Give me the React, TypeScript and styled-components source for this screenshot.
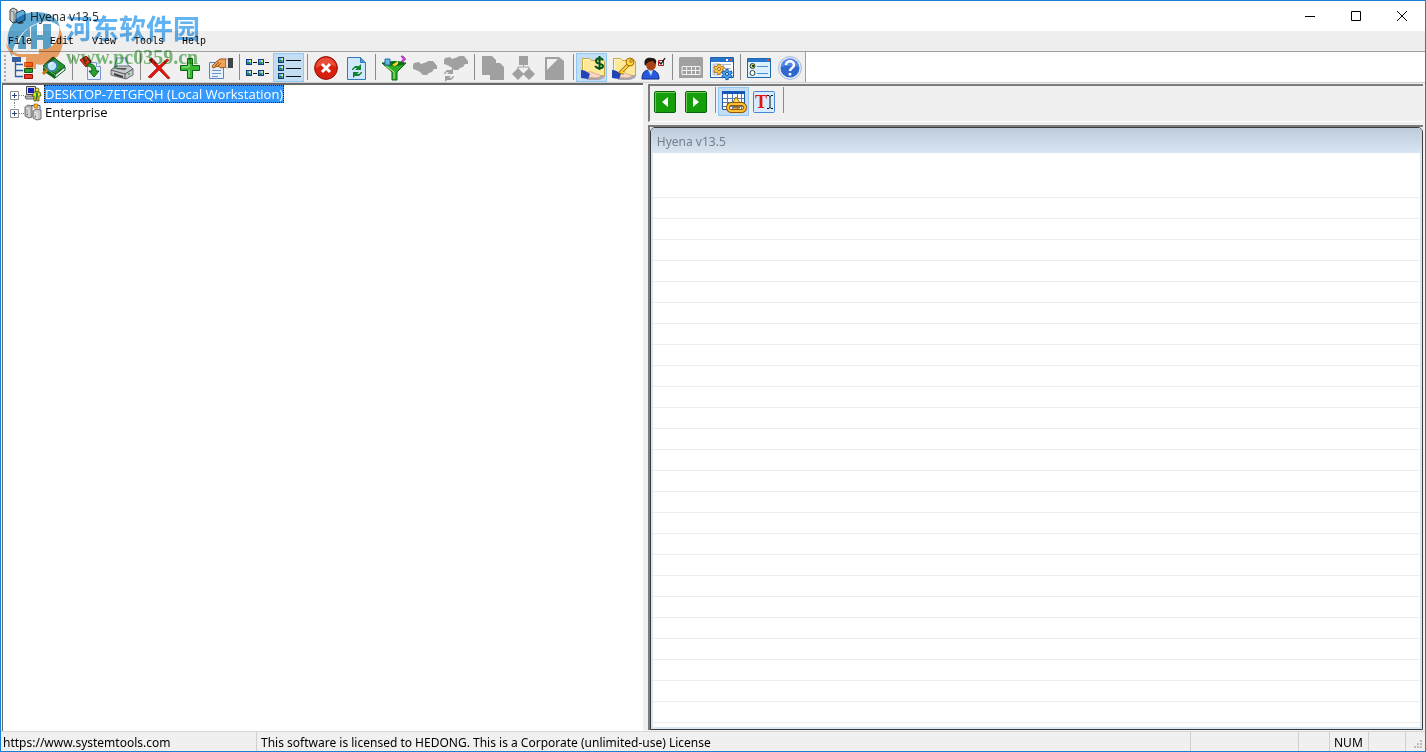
import React from "react";
import styled, { createGlobalStyle, css } from "styled-components";

const GlobalStyle = createGlobalStyle`
  * { box-sizing: border-box; }
  body { margin: 0; font-family: "Noto Sans", "Open Sans", sans-serif; font-size: 12px; color: #000; }
  button { font: inherit; color: inherit; background: none; border: 0; padding: 0; margin: 0; }
  svg { display: block; overflow: visible; flex: none; }
`;

const Window = styled.div`
  position: relative;
  display: flex;
  flex-direction: column;
  height: 100vh;
  border: 1px solid #1a7fd4;
  background: #fff;
`;

const TitleBar = styled.header`
  display: flex;
  align-items: center;
  height: 30px;
  flex: none;
  padding-left: 8px;
`;

const TitleText = styled.h1`
  flex: 1;
  margin: 0 0 0 5px;
  font-size: 12px;
  font-weight: 400;
  color: #333;
`;

const CaptionButton = styled.button`
  display: flex;
  align-items: center;
  justify-content: center;
  width: 46px;
  height: 30px;
`;

const MenuBar = styled.nav`
  display: flex;
  height: 21px;
  flex: none;
  padding-left: 7px;
  gap: 18px;
  background: #eee;
  border-bottom: 1px solid #a0a0a0;
`;

const MenuButton = styled.button`
  padding-top: 1px;
  font-family: "Liberation Mono", monospace;
  font-size: 10px;
  line-height: 20px;
`;

const ToolbarRow = styled.div`
  display: flex;
  height: 31px;
  flex: none;
  border-bottom: 1px solid #d0d0d0;
`;

const Toolbar = styled.div`
  display: flex;
  align-items: flex-end;
  background: #f0f0f0;
  border-right: 1px solid #a0a0a0;
`;

const Grip = styled.div`
  width: 6px;
  height: 28px;
  background: radial-gradient(circle at 4px 2px, #aaa 1px, transparent 1px) 0 0 / 6px 4px;
`;

const ToolButton = styled.button<{ $active?: boolean }>`
  display: flex;
  align-items: center;
  width: 31px;
  height: 29px;
  padding-left: ${(p) => (p.$active ? 2 : 3)}px;
  ${(p) =>
    p.$active &&
    css`
      background: #c2ddf4;
      border: 1px solid #90c8f6;
    `}
`;

const Separator = styled.div`
  width: 1px;
  height: 26px;
  margin: 0 2px 2px 3px;
  background: #8c8c8c;
`;

const Workspace = styled.main`
  display: flex;
  flex: 1;
  min-height: 0;
  background: #f0f0f0;
`;

const TreePane = styled.section`
  flex: 0 0 45%;
  margin-left: 1px;
  background: #fff;
  border-top: 2px solid #696969;
  border-left: 1px solid #696969;
`;

const Splitter = styled.div`
  width: 5px;
  background: #f0f0f0;
`;

const TreeList = styled.ul`
  list-style: none;
  margin: 0;
  padding: 0 0 0 7px;
`;

const TreeRow = styled.li`
  display: flex;
  align-items: center;
  height: 18px;
`;

const TreeLabel = styled.button<{ $selected?: boolean }>`
  height: 18px;
  margin-left: 3px;
  padding: 0;
  border: 1px solid transparent;
  font-family: "Open Sans", sans-serif;
  font-size: 13px;
  line-height: 16px;
  white-space: nowrap;
  ${(p) =>
    p.$selected &&
    css`
      color: #fff;
      background: #3399ff;
      border: 1px dotted #331a00;
    `}
`;

const Expander = styled.button`
  display: flex;
`;

const DetailPane = styled.section`
  display: flex;
  flex-direction: column;
  flex: 1;
  min-width: 0;
  padding: 1px 2px 1px 0;
`;

const DetailToolbar = styled.div`
  display: flex;
  align-items: flex-start;
  height: 38px;
  flex: none;
  padding-top: 1px;
  border-top: 2px solid #7c7c7c;
  border-left: 2px solid #7c7c7c;
  border-bottom: 1px solid #fff;
`;

const ChildArea = styled.div`
  display: flex;
  flex: 1;
  min-height: 0;
  margin-top: 3px;
  border-top: 2px solid #7c7c7c;
  border-left: 2px solid #7c7c7c;
`;

const ChildWindow = styled.div`
  display: flex;
  flex-direction: column;
  flex: 1;
  padding: 0 2px 2px 2px;
  background: #d9e5f1;
  border: 1px solid #3c3c3c;
  border-radius: 5px 5px 0 0;
`;

const ChildTitle = styled.h2`
  height: 25px;
  flex: none;
  margin: 0 -2px;
  padding-left: 6px;
  border-radius: 4px 4px 0 0;
  background: linear-gradient(#bccbdb, #d9e5f2);
  color: #76808a;
  font-size: 12px;
  font-weight: 400;
  line-height: 27px;
`;

const ListView = styled.div`
  flex: 1;
  padding-top: 24px;
  background: #fff;
`;

const ListLines = styled.div`
  height: 100%;
  background: repeating-linear-gradient(#fff 0 20px, #ededed 20px 21px);
`;

const StatusBar = styled.footer`
  display: flex;
  height: 20px;
  flex: none;
  background: #f0f0f0;
  border-top: 1px solid #d7d7d7;
  font-size: 12px;
  line-height: 21px;
  white-space: nowrap;
`;

const StatusCell = styled.div<{ $width?: number }>`
  ${(p) => (p.$width ? `width: ${p.$width}px; flex: none;` : "flex: 1; min-width: 0;")}
  padding-left: 2px;
  overflow: hidden;
  & + & {
    padding-left: 4px;
    border-left: 1px solid #d0d0d0;
  }
`;

const SizeGrip = styled.div`
  display: flex;
  align-items: flex-end;
  justify-content: flex-end;
  width: 20px;
  padding: 0 2px 2px 0;
  border-left: 1px solid #d0d0d0;
`;

const Watermark = styled.div`
  position: absolute;
  top: 10px;
  left: 3px;
  display: flex;
  mix-blend-mode: multiply;
  pointer-events: none;
`;

const WatermarkText = styled.div`
  display: flex;
  flex-direction: column;
  white-space: nowrap;
`;

const WatermarkName = styled.span`
  color: #62b3f2;
  font: 700 27px/34px "Noto Sans CJK SC", sans-serif;
`;

const WatermarkUrl = styled.span`
  padding-left: 1px;
  color: #7cc07c;
  font: 700 20px/24px "Liberation Serif", serif;
`;

type IconProps = { children: React.ReactNode; size?: number };
const Icon = ({ children, size = 24 }: IconProps) => (
  <svg width={size} height={size} viewBox={`0 0 ${size} ${size}`} aria-hidden="true">
    {children}
  </svg>
);

const TreeIcon = () => (
  <Icon>
    <path d="M5.500 5v16M5 8.500h8M5 14.500h8M5 20.500h8" stroke="#2a5ea8" fill="none" strokeWidth="1.300" />
    <path d="M2 1h9v5H2z" fill="#355e9e" />
    <path d="M14.500 6.500h8v4h-8z" fill="#ff8a30" stroke="#c85a10" />
    <path d="M14.500 12.500h8v4h-8z" fill="#2c9a35" stroke="#145c1c" />
    <path d="M14.500 18.500h8v4h-8z" fill="#ef3524" stroke="#981308" />
  </Icon>
);

const BookIcon = () => (
  <Icon>
    <path d="M12 1 24 10 14 18 2 10z" fill="#239632" stroke="#075a14" />
    <path d="M2 11 14 19v4L2 15z" fill="#0a6a1a" />
    <path d="m14 19 10-8v3l-10 8z" fill="#fff" stroke="#075a14" />
    <path d="m7 13-5 5" stroke="#b97913" strokeWidth="3" />
    <circle cx="11" cy="10" r="5" fill="#bce6fa" stroke="#3d80b5" strokeWidth="1.600" />
    <path d="M8.500 9a3 3 0 0 1 3-2" stroke="#fff" fill="none" />
  </Icon>
);

const DocArrowIcon = () => (
  <Icon>
    <path d="M9.500 6.500h9l4 4v13h-13z" fill="#e8f0fe" stroke="#7896cf" />
    <path d="M18.500 6.500v4h4" fill="#fff" stroke="#7896cf" />
    <path d="M2 4 8 0l5 5-5 6z" fill="#e13a20" stroke="#961505" />
    <path d="M9 8c6-1 9 2 9 7h3l-5 6-5-6h3c0-4-2-5-5-5z" fill="#2aa12f" stroke="#075f12" />
  </Icon>
);

const PrinterIcon = () => (
  <Icon>
    <path d="M8 2h9l3 10H5z" fill="#e4effc" stroke="#7d98b7" />
    <path d="M2 14l5-4h14l3 3v6l-7 4L2 19z" fill="#c7cacd" stroke="#686d72" />
    <path d="m2 14 14 4 8-5M16 18v5" stroke="#555" fill="none" />
    <path d="m5 17 9 3v2l-9-3z" fill="#383b3e" />
    <path d="M9 12h9l-2 2-9-1z" fill="#555" />
    <circle cx="20" cy="18" r="1" fill="#3aac39" />
  </Icon>
);

const DeleteIcon = () => (
  <Icon>
    <path d="M3 4 6 2l7 8 8-7 2 1-8 8 9 10-2 1-9-9-8 8-3-1 9-9z" fill="#e4150f" stroke="#9b0d09" strokeWidth=".6" />
  </Icon>
);

const AddIcon = () => (
  <Icon>
    <path d="M10.500 2.500h5v7h7v5h-7v8h-5v-8h-7v-5h7z" fill="#38b735" stroke="#08650d" />
    <path d="M12 4v7H5M12 14v7" stroke="#a5ec91" fill="none" />
  </Icon>
);

const PropertiesIcon = () => (
  <Icon>
    <path d="M1.500 6.500h14v16h-14z" fill="#e5f0ff" stroke="#5683c5" />
    <path d="M4 14.500h9M4 17.500h9M4 20.500h6" stroke="#7594c4" />
    <path d="m4 10 4-4 4-3h6v8l-5 1-3-2-5 2z" fill="#f2a255" stroke="#9b5515" />
    <path d="m7 10 4-4M9 11l4-4" stroke="#9b5515" />
    <path d="M18 3h2v9h-2z" fill="#fff" stroke="#777" strokeWidth=".5" />
    <path d="M20 2h5v10h-5z" fill="#454545" />
  </Icon>
);

const Tile = ({ x, y }: { x: number; y: number }) => (
  <g>
    <path d={`M${x} ${y}h6v6h-6z`} fill="#153d82" />
    <path d={`M${x + 1} ${y + 1}h4v4h-4z`} fill="#53b7dd" />
    <path d={`M${x + 1} ${y + 3}h3v2h-3z`} fill="#2d8b42" />
    <path d={`M${x + 3} ${y + 1}h2v2h-2z`} fill="#f2e15a" />
  </g>
);

const SmallListIcon = () => (
  <Icon>
    <Tile x={1} y={3} /><Tile x={13} y={3} /><Tile x={1} y={14} /><Tile x={13} y={14} />
    <path d="M8 6.500h4M20 6.500h4M8 17.500h4M20 17.500h4" stroke="#111" />
  </Icon>
);

const DetailListIcon = () => (
  <Icon>
    <Tile x={2} y={1} /><Tile x={2} y={9} /><Tile x={2} y={17} />
    <path d="M10 4.500h15M10 12.500h15M10 20.500h15" stroke="#111" />
  </Icon>
);

const StopIcon = () => (
  <Icon>
    <circle cx="13" cy="12" r="11.400" fill="#d9200e" stroke="#8d1207" />
    <path d="M3 12a10 10 0 0 1 20-1c-6-4-13-3-20 1z" fill="#f26750" opacity=".65" />
    <path d="m9 8 8 8m0-8-8 8" stroke="#fff" strokeWidth="3" />
  </Icon>
);

const RefreshArrows = () => (
  <path d="M0 4V3l3-3h4L9-2v6H3l2-2H3L1 4zM10 6v1l-3 3H3l-2 2V6h6L5 8h2l2-2z" />
);

const RefreshIcon = () => (
  <Icon>
    <path d="M3.500 1.500h13l5 5v17h-18z" fill="#cfe8ff" stroke="#3279c0" />
    <path d="M16.500 1.500v5h5" fill="#5493e0" stroke="#3279c0" />
    <g transform="translate(8 10)" fill="#128431"><RefreshArrows /></g>
  </Icon>
);

const FilterIcon = () => (
  <Icon>
    <path d="M1 7h24l-9 9v8h-5v-8z" fill="#2eac2a" stroke="#09630b" />
    <ellipse cx="13" cy="7.500" rx="11" ry="2.500" fill="#0b7011" />
    <path d="m5 10 8 6v7" stroke="#91dc72" strokeWidth="1.300" fill="none" />
    <path d="M4 3h5v6H4z" fill="#65b5ea" stroke="#286da5" />
    <path d="m11 9 6-4v3l-3 2z" fill="#ffdc28" />
    <path d="M20 0h2l3 3-3 3h-2l2-3z" fill="#d640df" stroke="#7c178c" strokeWidth=".5" />
  </Icon>
);

const handshake = "M1 9l1-2 5-1 2 2 6-2 1-1h5l4 5v3h-3l-2 3-3 1-2 2h-4l-3-3-2-1-2-1-3-1z";
const ShareIcon = () => <Icon><path d={handshake} fill="#a0a0a0" /></Icon>;
const ShareRefreshIcon = () => (
  <Icon>
    <path d={handshake} transform="translate(0 -5)" fill="#a0a0a0" />
    <g transform="translate(1 14)" fill="#a0a0a0"><RefreshArrows /></g>
  </Icon>
);
const CopyIcon = () => <Icon><path d="M2 0h10l4 4v3h4l4 4v13H10v-5H2z" fill="#a0a0a0" /></Icon>;
const OrgIcon = () => (
  <Icon>
    <path d="M8 0h9v9H8zM7 12l6 6-6 6-6-6zM18 12l6 6-6 6-6-6z" fill="#a0a0a0" />
    <path d="M12.500 8v3M7 13v-2h11v2" stroke="#a0a0a0" fill="none" />
  </Icon>
);
const PageIcon = () => (
  <Icon>
    <path d="M3 1h14l5 4v19H3z" fill="#a0a0a0" />
    <path d="M5 3h11L5 14z" fill="#f0f0f0" />
  </Icon>
);

const FolderHand = () => (
  <>
    <path d="M3.500 2.500h7l2 2h12l1 1v15h-22z" fill="#ffe999" stroke="#cba63b" />
    <path d="M4.500 19V3.500h6" stroke="#fffbd6" fill="none" />
    <path d="M10 19h15v3l-5 2H8z" fill="#a9a9b0" />
    <path d="M9 16c4-1 6 2 12 3l1 2-6 1-8-1z" fill="#f8d8c4" stroke="#b98468" strokeWidth=".5" />
    <path d="M2 14c4 0 6 2 9 4l-2 5-7-1z" fill="#2145b4" />
  </>
);
const DollarIcon = () => (
  <Icon>
    <FolderHand />
    <path d="M24 4c-2-3-7-2-7 1 0 4 7 2 7 5 0 3-6 3-8 0M20.500 0v14" fill="none" stroke="#00531a" strokeWidth="2" />
  </Icon>
);
const KeyIcon = () => (
  <Icon>
    <FolderHand />
    <path d="m19 8-8 8 3 1" stroke="#a26a00" strokeWidth="3.500" fill="none" />
    <path d="m20 7-9 9 3 1" stroke="#ffd541" strokeWidth="1.800" fill="none" />
    <circle cx="20" cy="6" r="4" fill="#ffd645" stroke="#a26a00" />
    <circle cx="21" cy="5" r="1.300" fill="#fff6cd" stroke="#a26a00" />
  </Icon>
);
const UserIcon = () => (
  <Icon>
    <path d="M1 23c0-7 3-9 8-9s9 2 9 9z" fill="#2659dd" stroke="#102c87" />
    <path d="m7 14 3 6 2-6z" fill="#b9dcff" />
    <ellipse cx="10" cy="8.500" rx="5" ry="6" fill="#a94318" />
    <path d="M4 10C2 3 6 1 11 2c5 0 5 5 3 6l-2-3-5 1z" fill="#211613" />
    <path d="M17.500 4.500h5v5h-5z" fill="#fff" stroke="#bd1916" />
    <path d="m18 6 2 2 4-6" stroke="#111" fill="none" strokeWidth="1.300" />
  </Icon>
);
const TableIcon = () => (
  <Icon>
    <path d="M2 1h22l1 1v20H1V2z" fill="#a0a0a0" />
    <path d="M4 10.500h18v8H4zM4 14.500h18M8.500 10v9M13.500 10v9M17.500 10v9" fill="none" stroke="#f0f0f0" />
  </Icon>
);
const gear = "M-1.500-6h3v2l2 1 2-1 1 3-2 1v1l2 1-1 3-2-1-2 1v2h-3V5l-2-1-2 1-1-3 2-1V0l-2-1 1-3 2 1 2-1z";
const WindowGearsIcon = () => (
  <Icon>
    <path d="M1.500 1.500h23v20h-23z" fill="#fff" stroke="#1c61b0" />
    <path d="M2 2h22v4H2z" fill="#2875cd" />
    <path d="M17 3h2v2h-2z" fill="#fff" /><path d="M21 3h2v2h-2z" fill="#ed4c24" />
    <path d="M4 8h5v11H4zM11 8.500h11M11 12.500h11" fill="#dceafa" stroke="#a4bddb" />
    <path d={gear} transform="translate(10 13) scale(.8)" fill="#ffc84a" stroke="#9b6100" />
    <circle cx="10" cy="13" r="1.500" fill="#fff" stroke="#9b6100" />
    <path d={gear} transform="translate(18 18) scale(.8)" fill="#47a4f2" stroke="#0b4a9c" />
    <circle cx="18" cy="18" r="1.500" fill="#fff" stroke="#0b4a9c" />
  </Icon>
);
const OptionsIcon = () => (
  <Icon>
    <path d="M1.500 2.500h23v19h-23z" fill="#dcefff" stroke="#1c68ad" />
    <path d="M2 3h22v3H2z" fill="#2875cd" /><path d="M21 3h2v2h-2z" fill="#ed4c24" />
    <circle cx="6.500" cy="10" r="2.500" fill="#d5d34b" stroke="#26463f" />
    <circle cx="6.500" cy="17" r="2.500" fill="#fff" stroke="#26463f" />
    <path d="M6 9h2v2H6z" fill="#153f22" />
    <path d="M11 10.500h11M11 17.500h11" stroke="#4a91d0" />
  </Icon>
);
const HelpIcon = () => (
  <Icon>
    <circle cx="13" cy="12" r="11.400" fill="#e8efff" stroke="#a4b6dc" />
    <circle cx="13" cy="12" r="9.500" fill="#2e68ce" />
    <path d="M4 11a9 9 0 0 1 18 0c-6-2-12-1-18 0z" fill="#6d9bed" opacity=".65" />
    <path d="M9 9c0-5 8-5 8 0 0 3-4 3-4 6" stroke="#fff" strokeWidth="2.500" fill="none" />
    <path d="M11.700 17h2.600v2.500h-2.600z" fill="#fff" />
  </Icon>
);

const ArrowTile = ({ forward }: { forward?: boolean }) => (
  <Icon>
    <rect x="1.500" y="1.500" width="21" height="21" rx="1.500" fill="#159e0a" stroke="#08650a" />
    <path d="M2.500 22V2.500H22" stroke="#73c85c" fill="none" />
    <path d={forward ? "m9 7 6 5-6 5z" : "m15 7-6 5 6 5z"} fill="#fff" />
  </Icon>
);
const LinkTableIcon = () => (
  <Icon>
    <path d="M1.500 1.500h22v18h-22z" fill="#fff" stroke="#2054a6" />
    <path d="M1 1h23v3H1z" fill="#1457b9" />
    <path d="M2 8.500h21M2 12.500h21M2 16.500h21M6.500 4v15M11.500 4v15M16.500 4v15M20.500 4v15" stroke="#507ab3" />
    <path d="m15 7 5 7h-9z" fill="#ffe158" stroke="#ad7400" />
    <rect x="7" y="14" width="17" height="7" rx="3.500" fill="none" stroke="#935700" strokeWidth="4" />
    <rect x="7" y="14" width="17" height="7" rx="3.500" fill="none" stroke="#ffc236" strokeWidth="2" />
    <path d="M12 17.500h7" stroke="#a86700" strokeWidth="2" />
  </Icon>
);
const TextIcon = () => (
  <Icon>
    <rect x="1.500" y="1.500" width="21" height="21" rx="1" fill="#d8ecff" stroke="#4685d2" />
    <text x="3" y="18" fill="#e01616" fontFamily="Liberation Serif, serif" fontWeight="700" fontSize="18">T</text>
    <path d="M15 5.500h2l1 1 1-1h2M18 6v12M15 18.500h2l1-1 1 1h2" stroke="#111" fill="none" />
  </Icon>
);

const AppIcon = () => (
  <Icon size={16}>
    <path d="M1 2 4 0l4 2v12l-4 1-3-3z" fill="#c9cccd" stroke="#444" />
    <path d="m2 3 3 1v10" stroke="#777" fill="none" />
    <path d="m7 5 7-3 2 2v8l-7 3-2-2z" fill="#5eaee0" stroke="#29495c" />
    <path d="m8 15 5-2 2 2-4 1z" fill="#555" />
  </Icon>
);
const WorkstationIcon = () => (
  <Icon size={16}>
    <path d="M1.500.5h9v8h-9z" fill="#ddd" stroke="#444" />
    <path d="M3 2h6v5H3z" fill="#1520b9" />
    <path d="M0 10h11l2 3H1z" fill="#bbb" stroke="#333" strokeWidth=".7" />
    <circle cx="12" cy="4" r="2" fill="#e6df26" stroke="#343400" strokeWidth=".6" />
    <path d="M9 6h6l1 4h-2v5h-2v-4h-1v4H9v-5H7z" fill="#e5de22" stroke="#343400" strokeWidth=".7" />
    <path d="M11 7h2v4h-2z" fill="#168b44" />
  </Icon>
);
const EnterpriseIcon = () => (
  <Icon size={16}>
    <path d="M6 1.500h9v4" stroke="#1664be" fill="none" />
    <path d="m0 3 3-2 4 1v11l-3 1-4-2z" fill="#b8b8b8" stroke="#555" strokeWidth=".8" />
    <path d="m8 7 3-2 5 1v9l-4 1-4-2z" fill="#c8c8c8" stroke="#555" strokeWidth=".8" />
    <path d="M9 0h4v4H9z" fill="#ffb11c" stroke="#a85f00" strokeWidth=".6" />
    <path d="m1 4 3 1M9 8l3 1M4 5v8M12 9v6" stroke="#eee" />
    <path d="M2 10h1v1H2zM10 12h1v1h-1z" fill="#15a22a" />
  </Icon>
);
const ExpandMark = ({ last }: { last?: boolean }) => (
  <svg width="15" height="18" viewBox="0 0 15 18" aria-hidden="true">
    <path d={last ? "M4.500 0v6M9 10.500h6" : "M4.500 15v3M9 10.500h6"} stroke="#888" strokeDasharray="1 1" />
    <path d="M.5 6.500h8v8h-8z" fill="#fff" stroke="#919191" />
    <path d="M2 10.500h5M4.500 8v5" stroke="#2d4479" />
  </svg>
);

type Tool = { label: string; icon: React.ReactNode; active?: boolean };
const toolGroups: Tool[][] = [
  [{ label: "Tree", icon: <TreeIcon /> }, { label: "Find", icon: <BookIcon /> }],
  [{ label: "Export", icon: <DocArrowIcon /> }, { label: "Print", icon: <PrinterIcon /> }],
  [{ label: "Delete", icon: <DeleteIcon /> }, { label: "Add", icon: <AddIcon /> }, { label: "Properties", icon: <PropertiesIcon /> }],
  [{ label: "List", icon: <SmallListIcon /> }, { label: "Details", icon: <DetailListIcon />, active: true }],
  [{ label: "Stop", icon: <StopIcon /> }, { label: "Refresh", icon: <RefreshIcon /> }],
  [{ label: "Filter", icon: <FilterIcon /> }, { label: "Share", icon: <ShareIcon /> }, { label: "Refresh shares", icon: <ShareRefreshIcon /> }],
  [{ label: "Copy", icon: <CopyIcon /> }, { label: "Organization", icon: <OrgIcon /> }, { label: "Page", icon: <PageIcon /> }],
  [{ label: "Hidden shares", icon: <DollarIcon />, active: true }, { label: "Access", icon: <KeyIcon /> }, { label: "User", icon: <UserIcon /> }],
  [{ label: "Table", icon: <TableIcon /> }, { label: "Services", icon: <WindowGearsIcon /> }],
  [{ label: "Options", icon: <OptionsIcon /> }, { label: "Help", icon: <HelpIcon /> }],
];
const detailGroups: Tool[][] = [
  [{ label: "Back", icon: <ArrowTile /> }, { label: "Forward", icon: <ArrowTile forward /> }],
  [{ label: "Link table", icon: <LinkTableIcon />, active: true }, { label: "Text", icon: <TextIcon /> }],
];

const ToolGroups = ({ groups }: { groups: Tool[][] }) => (
  <>
    {groups.map((group, i) => (
      <React.Fragment key={i}>
        {i > 0 && <Separator />}
        {group.map((t) => (
          <ToolButton key={t.label} aria-label={t.label} $active={t.active}>{t.icon}</ToolButton>
        ))}
      </React.Fragment>
    ))}
  </>
);

export default function App() {
  return (
    <>
      <GlobalStyle />
      <Window>
        <TitleBar>
          <AppIcon />
          <TitleText>Hyena v13.5</TitleText>
          <CaptionButton aria-label="Minimize"><Icon size={10}><path d="M0 5.500h10" stroke="#000" /></Icon></CaptionButton>
          <CaptionButton aria-label="Maximize"><Icon size={10}><path d="M.5.5h9v9h-9z" stroke="#000" fill="none" /></Icon></CaptionButton>
          <CaptionButton aria-label="Close"><Icon size={10}><path d="m0 0 10 10M10 0 0 10" stroke="#000" /></Icon></CaptionButton>
        </TitleBar>
        <MenuBar>
          {["File", "Edit", "View", "Tools", "Help"].map((m) => <MenuButton key={m}>{m}</MenuButton>)}
        </MenuBar>
        <ToolbarRow>
          <Toolbar role="toolbar" aria-label="Main">
            <Grip />
            <ToolGroups groups={toolGroups} />
          </Toolbar>
        </ToolbarRow>
        <Workspace>
          <TreePane>
            <TreeList>
              <TreeRow>
                <Expander aria-label="Expand workstation"><ExpandMark /></Expander>
                <WorkstationIcon />
                <TreeLabel $selected>DESKTOP-7ETGFQH (Local Workstation)</TreeLabel>
              </TreeRow>
              <TreeRow>
                <Expander aria-label="Expand enterprise"><ExpandMark last /></Expander>
                <EnterpriseIcon />
                <TreeLabel>Enterprise</TreeLabel>
              </TreeRow>
            </TreeList>
          </TreePane>
          <Splitter />
          <DetailPane>
            <DetailToolbar role="toolbar" aria-label="Details">
              <ToolGroups groups={detailGroups} />
              <Separator />
            </DetailToolbar>
            <ChildArea>
              <ChildWindow>
                <ChildTitle>Hyena v13.5</ChildTitle>
                <ListView><ListLines /></ListView>
              </ChildWindow>
            </ChildArea>
          </DetailPane>
        </Workspace>
        <StatusBar>
          <StatusCell $width={255}>https://www.systemtools.com</StatusCell>
          <StatusCell>This software is licensed to HEDONG. This is a Corporate (unlimited-use) License</StatusCell>
          <StatusCell $width={108} />
          <StatusCell $width={31} />
          <StatusCell $width={39}>NUM</StatusCell>
          <StatusCell $width={37} />
          <SizeGrip>
            <Icon size={9}><path d="M6 0h2v2H6zM3 3h2v2H3zM6 3h2v2H6zM0 6h2v2H0zM3 6h2v2H3zM6 6h2v2H6z" fill="#bbb" /></Icon>
          </SizeGrip>
        </StatusBar>
        <Watermark>
          <svg width="61" height="60" viewBox="0 0 61 60" aria-hidden="true">
            <path d="M8 46C-4 22 10 1 32 1c13 0 22 6 24 15-6-6-14-7-22-4C20 17 9 30 8 46z" fill="#5fa9d3" />
            <path d="M14 38c0-9 4-16 12-22v10h-4v12zM27 16l6-3v11h6V13h8v25h-8V29h-6v9h-6z" fill="#5fa9d3" />
            <path d="M2 32c4 7 8 10 13 11h20v-5h8c9-4 13-13 12-22 9 16 1 34-14 37-4 1-7 1-9 0v5h-10V46C11 47 3 42 2 32z" fill="#f5a765" />
          </svg>
          <WatermarkText>
            <WatermarkName>河东软件园</WatermarkName>
            <WatermarkUrl>www.pc0359.cn</WatermarkUrl>
          </WatermarkText>
        </Watermark>
      </Window>
    </>
  );
}
